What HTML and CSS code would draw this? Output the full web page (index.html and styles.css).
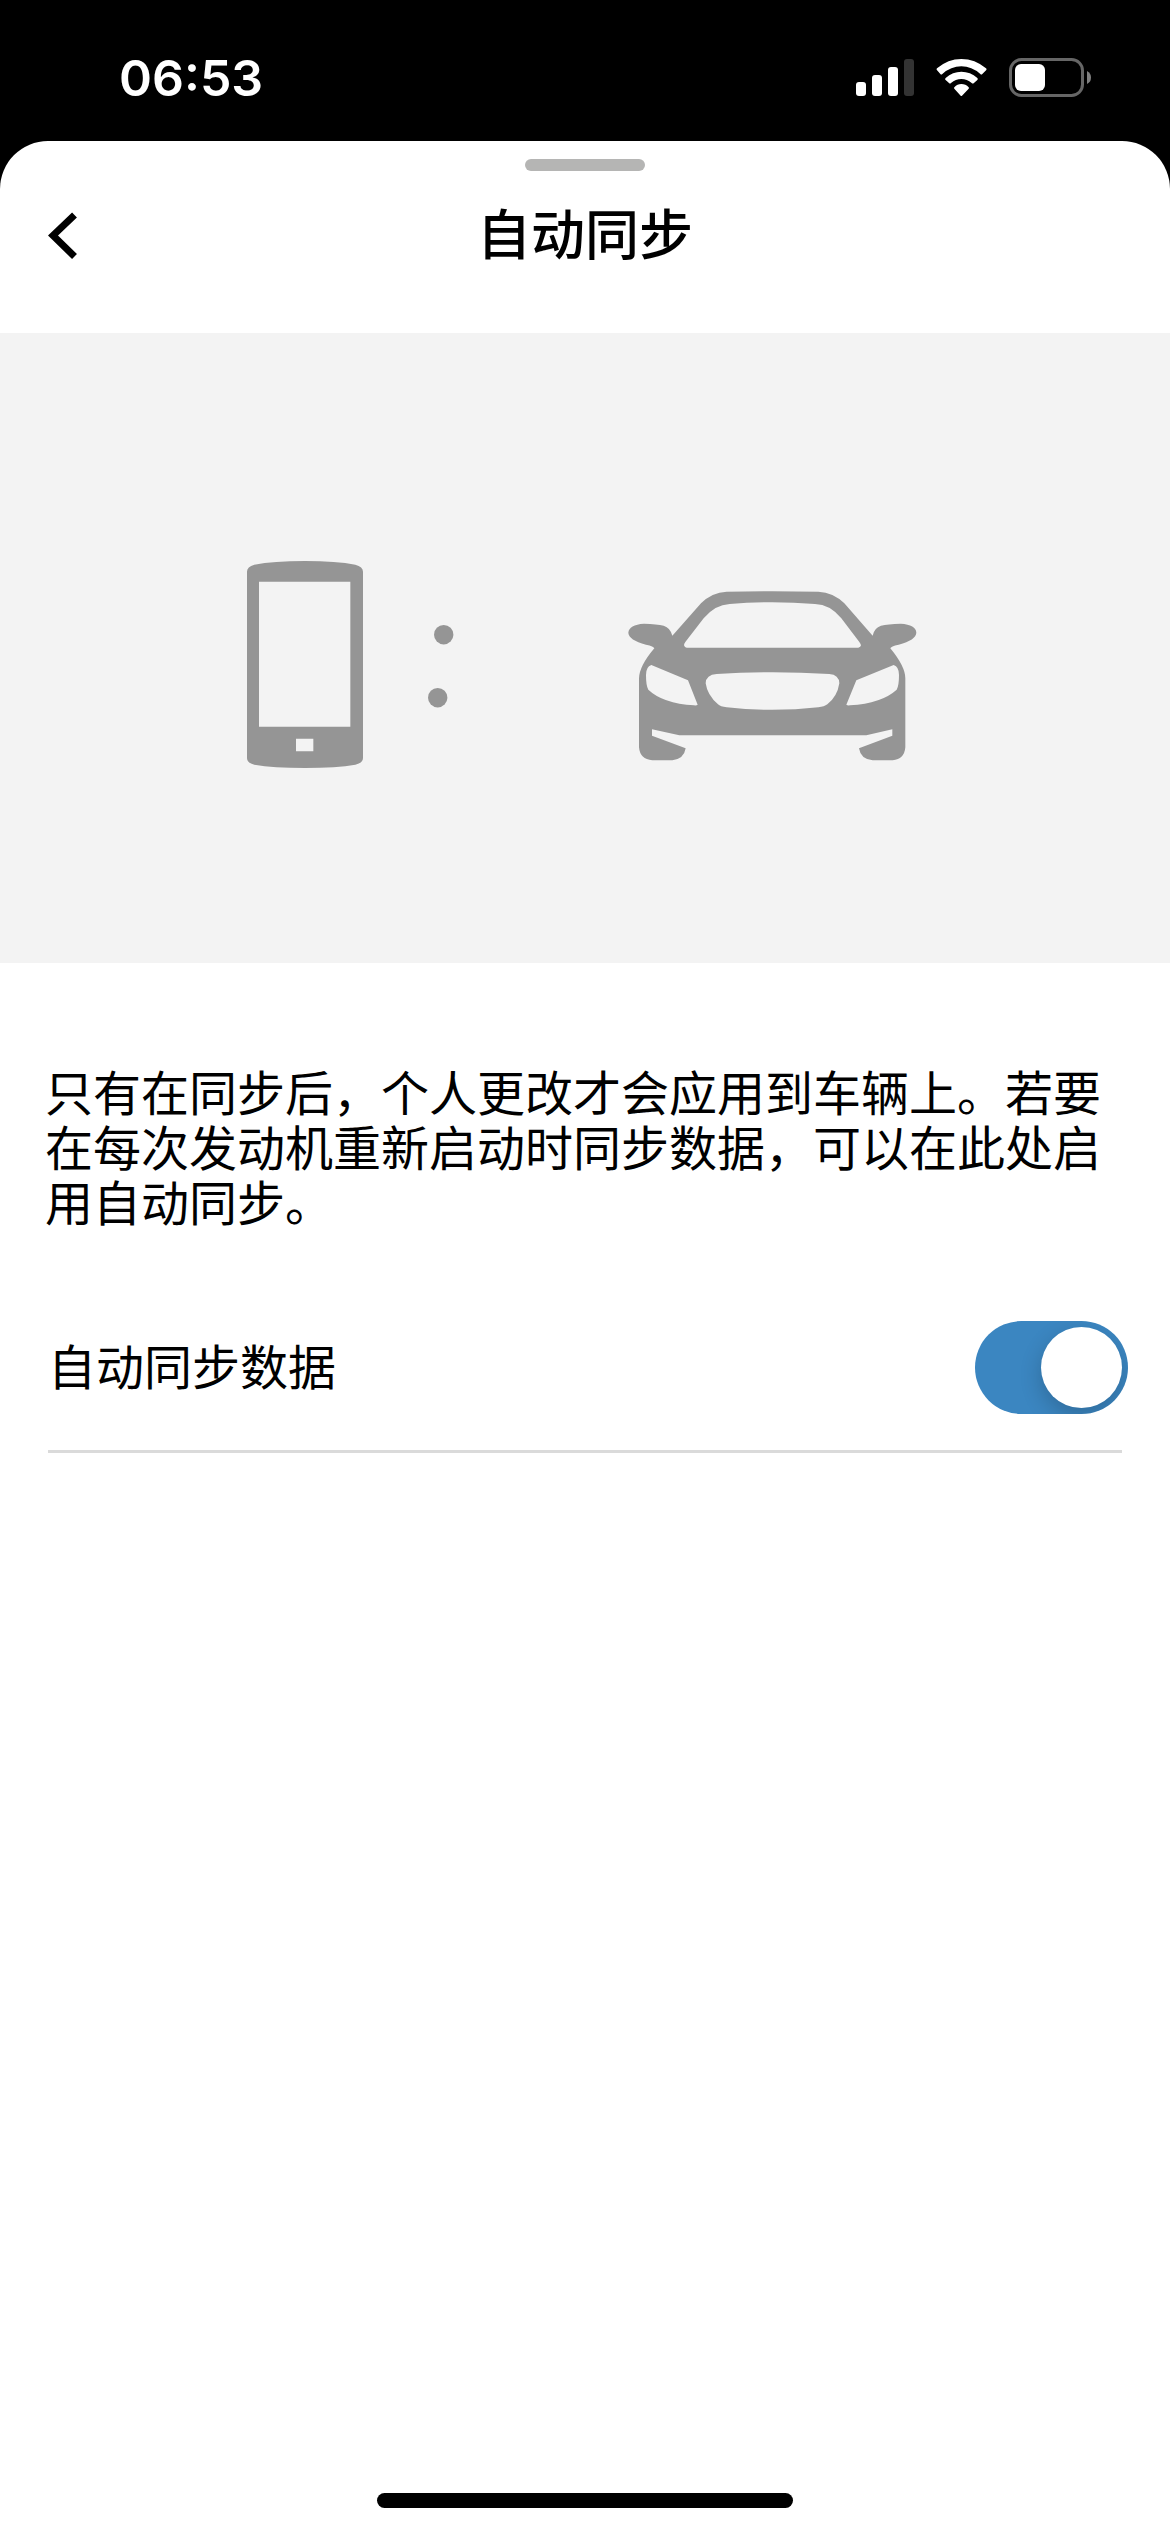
FILE: index.html
```html
<!DOCTYPE html>
<html lang="zh-CN">
<head>
    <meta charset="UTF-8">
    <meta name="viewport" content="width=device-width, initial-scale=1.0">
    <title>自动同步</title>
    <link rel="stylesheet" href="styles.css">
</head>
<body>
    <div class="status-bar">
        <span class="time">06:53</span>
        <div class="status-icons">
            <svg class="signal" viewBox="0 0 58 40">
                <rect x="0" y="24" width="10" height="14" rx="3"/>
                <rect x="16" y="17" width="10" height="21" rx="3"/>
                <rect x="32" y="9" width="10" height="29" rx="3"/>
                <rect x="48" y="1" width="10" height="37" rx="3" fill="#333"/>
            </svg>
            <svg class="wifi" viewBox="348 174 153 120">
                <path d="M350 209 Q349 207 351 205 Q384 177 424 177 Q465 177 498 205 Q501 207 499 210 L487 222 Q484 225 481 222 Q455 199 424 199 Q393 199 367 222 Q364 225 361 222 Z"/>
                <path d="M376 239 Q374 237 377 234 Q398 215 424 215 Q451 215 472 234 Q475 237 472 240 L461 250 Q458 252 455 249 Q441 237 424 237 Q407 237 393 249 Q390 252 387 249 Z"/>
                <path d="M403 266 Q401 264 403 262 Q412 252 424 252 Q437 252 446 262 Q448 264 446 266 L426 287 Q424 289 422 287 Z"/>
            </svg>
            <svg class="battery" viewBox="0 0 83 40">
                <rect x="1.5" y="1.5" width="72" height="36" rx="11" fill="none" stroke="#666" stroke-width="3"/>
                <rect x="6" y="6" width="30" height="27" rx="6"/>
                <path d="M78 13 Q82 15 82 19.500 Q82 24 78 26 Z" fill="#808080"/>
            </svg>
        </div>
    </div>

    <main class="sheet">
        <div class="handle"></div>
        <header class="header">
            <button class="back" type="button" aria-label="返回">
                <svg viewBox="0 0 30 48">
                    <path d="M26.500 3 L5 23.500 L26.500 44.500" fill="none" stroke="#000" stroke-width="7"/>
                </svg>
            </button>
            <h1>自动同步</h1>
        </header>

        <div class="hero">
            <svg class="sync-picture" viewBox="240 530 690 240">
                <!-- phone -->
                <g transform="translate(220 530) scale(.33333)">
                    <path fill-rule="evenodd" d="M81 125 Q81 110 103 104 Q160 93 255 93 Q350 93 406 104 Q429 110 429 125 V684 Q429 699 406 704 Q350 714 255 714 Q160 714 103 704 Q81 699 81 684 Z M117 155 V590 H391 V155 Z M228 626 V664 H280 V626 Z"/>
                </g>
                <!-- sync dots -->
                <circle cx="443.700" cy="634.700" r="9.700"/>
                <circle cx="437.700" cy="697.700" r="9.700"/>
                <!-- car -->
                <g transform="translate(600 560) scale(.33333)">
                    <path fill-rule="evenodd" d="M217 227 L303 130 Q335 97 380 95 Q517 92 655 95 Q700 97 733 130 L818 227 Q823 203 843 197 Q863 192 902 191 Q948 194 949 218 Q948 240 896 254 Q872 259 871 265 Q916 320 916 355 V562 Q913 598 878 601 H818 Q782 598 777 565 L877 527 V508 L799 526 H238 L156 508 V527 L257 565 Q252 597 217 601 H157 Q120 598 117 562 V355 Q118 318 163 265 Q162 259 138 254 Q86 240 85 218 Q87 194 132 191 Q171 192 191 197 Q211 203 217 227 Z
                        M252 256 Q254 263 260 263 H775 Q782 262 783 256 Q782 251 778 246 L724 175 Q690 133 645 132 Q517 121 389 132 Q345 134 311 175 L256 246 Q252 251 252 256 Z
                        M138 345 Q138 320 154 315 L264 361 L293 434 Q290 437 282 436 Q188 430 145 389 Q138 378 138 345 Z
                        M897 345 Q897 320 881 315 L769 361 L739 434 Q742 437 750 436 Q845 430 890 389 Q897 378 897 345 Z
                        M317 370 Q318 344 350 342 Q517 331 688 342 Q717 344 718 370 Q712 410 682 433 Q673 440 655 442 Q517 457 380 442 Q361 440 354 433 Q322 406 317 370 Z"/>
                </g>
            </svg>
        </div>

        <p class="description">只有在同步后，个人更改才会应用到车辆上。若要在每次发动机重新启动时同步数据，可以在此处启用自动同步。</p>

        <div class="setting">
            <label for="auto-sync">自动同步数据</label>
            <input class="switch" type="checkbox" role="switch" id="auto-sync" checked>
        </div>
    </main>

    <div class="home-indicator"></div>
</body>
</html>
```

FILE: styles.css
```css
* {
    box-sizing: border-box;
}
body {
    display: flex;
    flex-direction: column;
    min-height: 100vh;
    margin: 0;
    background-color: #000;
    color: #000;
    font-family: "Noto Sans CJK SC", sans-serif;
}
.status-bar {
    display: flex;
    justify-content: space-between;
    align-items: center;
    height: 141px;
    padding: 15px 78px 0 119px;
    color: #fff;
}
.time {
    font-family: Inter, sans-serif;
    font-size: 50px;
    font-weight: 600;
    line-height: 60px;
}
.status-icons {
    display: flex;
    align-items: center;
    gap: 22px;
    fill: #fff;
}
.status-icons svg {
    display: block;
    height: 40px;
}
.signal {
    width: 58px;
}
.wifi {
    width: 51px;
}
.battery {
    width: 83px;
}
.sheet {
    flex: 1;
    padding-top: 18px;
    background-color: #fff;
    border-radius: 48px 48px 0 0;
}
.handle {
    width: 120px;
    height: 12px;
    margin: 0 auto;
    background-color: #b5b5b4;
    border-radius: 6px;
}
.header {
    display: grid;
    grid-template-columns: 1fr auto 1fr;
    align-items: center;
    height: 162px;
    padding: 0 48px 32px;
}
.back {
    justify-self: start;
    padding: 0;
    border: none;
    background: none;
    cursor: pointer;
}
.back svg {
    display: block;
    width: 30px;
    height: 48px;
}
h1 {
    margin: 0;
    padding-bottom: 8px;
    font-size: 54px;
    font-weight: 500;
    line-height: 80px;
}
.hero {
    display: flex;
    justify-content: center;
    height: 630px;
    padding-top: 197px;
    background-color: #f3f3f3;
}
.sync-picture {
    width: 690px;
    height: 240px;
    fill: #959595;
}
.description {
    margin: 0;
    padding: 100px 45px 0;
    font-size: 48px;
    line-height: 55px;
}
.setting {
    display: flex;
    justify-content: space-between;
    align-items: center;
    height: 168px;
    margin: 57px 48px 0;
    border-bottom: 3px solid #dadada;
}
.setting label {
    padding-bottom: 8px;
    font-size: 48px;
    line-height: 72px;
}
.switch {
    appearance: none;
    width: 153px;
    height: 93px;
    margin: 0 -6px 0 0;
    padding: 6px;
    background-color: #3b86c1;
    border-radius: 47px;
    overflow: hidden;
    cursor: pointer;
}
.switch::before {
    content: "";
    display: block;
    width: 81px;
    height: 81px;
    background-color: #fff;
    border-radius: 50%;
    box-shadow: 0 8px 22px rgba(0, 0, 0, 0.2);
}
.switch:checked::before {
    margin-left: auto;
}
.switch:not(:checked) {
    background-color: #b5b5b4;
}
.home-indicator {
    padding: 0 377px 24px;
    background-color: #fff;
}
.home-indicator::before {
    content: "";
    display: block;
    height: 15px;
    background-color: #000;
    border-radius: 8px;
}
```
